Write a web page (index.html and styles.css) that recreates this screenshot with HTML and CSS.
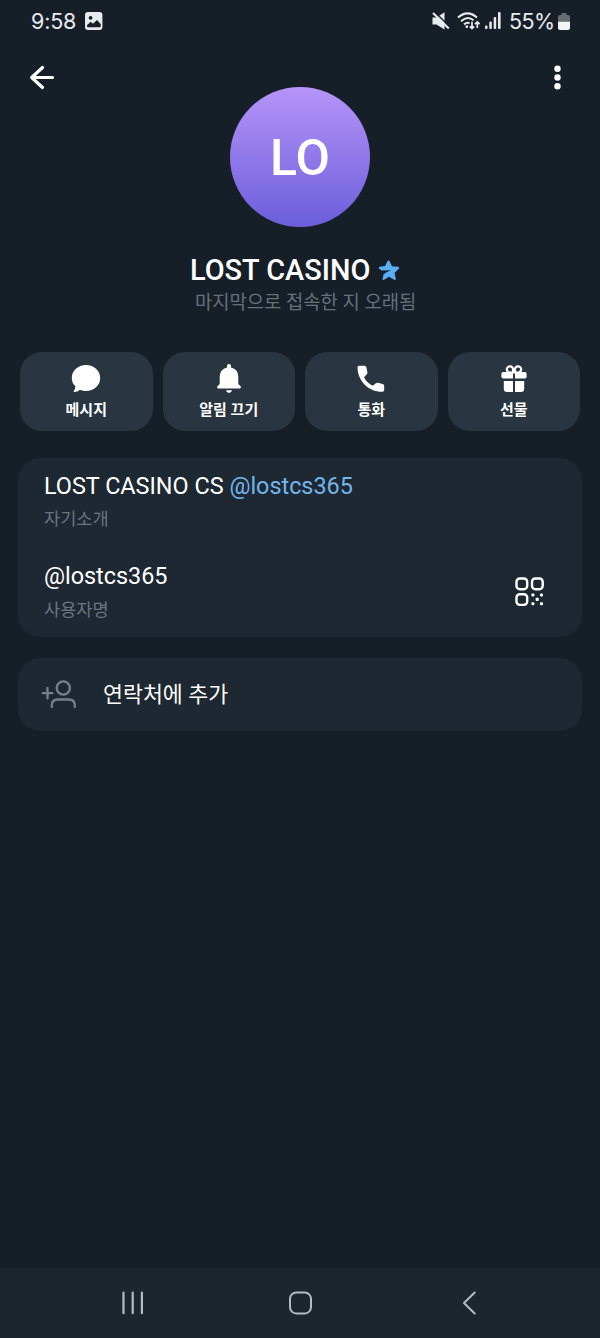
FILE: index.html
```html
<!DOCTYPE html>
<html lang="ko">
<head>
<meta charset="utf-8">
<title>LOST CASINO</title>
<link rel="stylesheet" href="styles.css">
</head>
<body>
<div class="screen">
  <div class="status">
    <span class="time">9:58</span>
    <svg class="st-photo" width="18" height="18" viewBox="0 0 18 18"><rect width="17.4" height="18" rx="3" fill="#e8ebee"/><circle cx="5.6" cy="5.8" r="1.9" fill="#161e27"/><path d="M2 13.3 5.7 9.8 8 11.8 12 8 15.8 12.3V14q0 1.300-1.300 1.300H3.300Q2 15.300 2 14z" fill="#161e27"/></svg>
    <div class="status-right">
      <svg width="18" height="18" viewBox="0 0 18 18"><path d="M.5 5.500h4L12.500.3v17.200L4.500 12.500h-4z" fill="#e8ebee"/><path d="M2.500-.2 18 15" stroke="#161e27" stroke-width="1.500"/><path d="M1 1 16.800 16.500" stroke="#e8ebee" stroke-width="2.100"/></svg>
      <svg class="st-wifi" width="24" height="18" viewBox="0 0 24 18" fill="none" stroke="#e8ebee" stroke-width="2"><path d="M1 5.500Q10.500-2.800 20 5.500M4 9.200Q10.500 3.200 16.500 8.300M7 12.500q3-2.600 5.500-1.200"/><circle cx="9.800" cy="14.700" r="1.400" fill="#e8ebee" stroke="none"/><path stroke-width="1.700" d="M15 9.800v6.700M12.800 14.300l2.200 2.200 2.200-2.200M20.300 16V10M18 12.200l2.300-2.300 2.300 2.300"/></svg>
      <svg class="st-signal" width="17" height="18" viewBox="0 0 17 18" fill="#e8ebee"><rect x="0" y="13.500" width="2.500" height="3.500" rx="1"/><rect x="4.300" y="9.500" width="2.500" height="7.500" rx="1"/><rect x="8.700" y="5" width="2.500" height="12" rx="1"/><rect x="13" y="0" width="2.600" height="17" rx="1"/></svg>
      <span class="percent">55%</span>
      <svg class="st-batt" width="12" height="17" viewBox="0 0 12 17"><path d="M0 4q0-2 2-2h1.500V1q0-1 1-1h3q1 0 1 1v1H10q2 0 2 2v5H0z" fill="#666c74"/><path d="M0 8.700h12V15q0 2-2 2H2q-2 0-2-2z" fill="#f2f4f6"/></svg>
    </div>
  </div>

  <div class="hero">
    <svg class="back" width="26" height="26" viewBox="0 0 26 26" fill="none" stroke="#fff" stroke-width="3.200" stroke-linecap="round" stroke-linejoin="round"><path d="M23.500 13.500H3M13.500 3.500 2.700 13.500l10.800 10"/></svg>
    <div class="avatar">LO</div>
    <svg class="more" width="8" height="24" viewBox="0 0 8 24" fill="#fff"><circle cx="4.500" cy="3.700" r="3.200"/><circle cx="4.500" cy="12.500" r="3.200"/><circle cx="4.500" cy="21.300" r="3.200"/></svg>
  </div>

  <div class="name-row">
    <span class="name">LOST CASINO</span>
    <svg width="22" height="21" viewBox="0 0 22 21"><path d="M9.400 1.200q1.300-1.600 2.300.2l2.300 4.800 6 .6q2 .4.700 1.900l-4.200 4.200 1.300 5.600q.2 2-1.600 1.200L11 16.800l-4.900 3q-1.900.8-1.500-1.200l1-4.300Q8.500 11.800 13.200 10.300 7.500 10.300 3.600 10.600L1 8.400Q0 7 1.800 6.700l5.400-.6z" fill="#5aaef5"/></svg>
  </div>
  <div class="seen">마지막으로 접속한 지 오래됨</div>

  <div class="actions">
    <div class="action">
      <svg width="30" height="28" viewBox="0 0 30 28"><path d="M15 0C23 0 29.200 5.600 29.200 13S23 26 15 26q-3.300 0-6-1.300-2.300 2.400-5.600 2.400-1.300-.2-.6-1.200 1.500-1.800 1.600-4.700Q.8 18 .8 13C.8 5.600 7 0 15 0z" fill="#fff"/></svg>
      <span>메시지</span>
    </div>
    <div class="action">
      <svg width="26" height="30" viewBox="0 0 26 30" fill="#fff"><path d="M13 0q2 0 2 2v1.500q7.300 1.500 7.300 10V20l2.500 2.600q.8 1.700-1 1.900H2.200q-1.800-.2-1-1.900L3.700 20v-6.500q0-8.500 7.300-10V2q0-2 2-2zM10 26.300h6q-.5 2.700-3 2.700t-3-2.700z"/></svg>
      <span>알림 끄기</span>
    </div>
    <div class="action">
      <svg width="28" height="28" viewBox="0 0 28 28"><path d="M2 .8h5.600q1.500 0 1.800 1.600l1 4.800q.2 1.200-.6 2L7 12.200q3 6 8.800 8.500l3-2.400q1-.8 2.100-.6l4.800 1.200q1.500.4 1.500 1.800V25q0 1.800-1.700 1.800C11.500 27 .8 16 .5 2.500Q.5 1 2 .8z" fill="#fff"/></svg>
      <span>통화</span>
    </div>
    <div class="action">
      <svg width="26" height="28" viewBox="0 0 26 28"><g fill="none" stroke="#fff" stroke-width="2.200"><path d="M12 7.500H8.500A3.100 3.100 0 1 1 12 5zM14 7.500h3.500A3.100 3.100 0 1 0 14 5z"/></g><path d="M2.200 7H12v6.500H2.200Q.4 13.500.4 11.800V8.700Q.4 7 2.200 7zM14 7h9.800q1.800 0 1.800 1.700v3.100q0 1.700-1.800 1.700H14zM2.800 16H12v11H6q-3.200 0-3.200-3.200zM14 16h9.200v7.800Q23.200 27 20 27h-6z" fill="#fff"/></svg>
      <span>선물</span>
    </div>
  </div>

  <div class="card info">
    <div>
      <div class="value">LOST CASINO CS <span class="link">@lostcs365</span></div>
      <div class="label">자기소개</div>
      <div class="value username">@lostcs365</div>
      <div class="label">사용자명</div>
    </div>
    <svg class="qr" width="30" height="30" viewBox="0 0 30 30"><g fill="none" stroke="#fff" stroke-width="2.400"><rect x="1.500" y="1.500" width="10.700" height="10.700" rx="3.300"/><rect x="17" y="1.500" width="10.700" height="10.700" rx="3.300"/><rect x="1.500" y="17.200" width="10.700" height="10.700" rx="3.300"/></g><g fill="#fff"><rect x="16.400" y="16.500" width="3" height="3" rx="1"/><rect x="25" y="16.500" width="3" height="3" rx="1"/><rect x="20.600" y="20.800" width="3.200" height="3.200" rx="1"/><rect x="16.400" y="25.200" width="3" height="3" rx="1"/><rect x="25" y="25.200" width="3" height="3" rx="1"/></g></svg>
  </div>

  <div class="card add">
    <svg width="36" height="30" viewBox="0 0 36 30" fill="none" stroke="#75808a" stroke-width="2.300" stroke-linecap="round"><circle cx="22.300" cy="8" r="6.600"/><path d="M10.800 27v-1.500q0-6 6-6h11q6 0 6 6V27M1.800 13.200h9.400M6.500 8v10.400"/></svg>
    <span>연락처에 추가</span>
  </div>

  <div class="nav">
    <svg width="24" height="26" viewBox="0 0 24 26" stroke="#b4bbc3" stroke-width="2.200" stroke-linecap="round"><path d="M4.500 2.600v20.600M13.700 2.600v20.600M22.900 2.600v20.600"/></svg>
    <svg width="24" height="26" viewBox="0 0 24 26" fill="none" stroke="#b4bbc3" stroke-width="2"><rect x="2" y="2.500" width="21" height="21" rx="6.300"/></svg>
    <svg width="24" height="26" viewBox="0 0 24 26" fill="none" stroke="#b4bbc3" stroke-width="2" stroke-linecap="round" stroke-linejoin="round"><path d="M17.700 2.500 7 13l10.700 10.500"/></svg>
  </div>
</div>
</body>
</html>
```
FILE: styles.css
```css
* { box-sizing: border-box; }
body { margin: 0; background: #161e27; }
svg { display: block; flex: none; overflow: visible; }
.screen {
  width: 600px;
  height: 1338px;
  display: flex;
  flex-direction: column;
  background: #161e27;
  color: #fff;
  font-family: Roboto, "Noto Sans CJK KR", sans-serif;
}
.status {
  height: 42px;
  padding: 0 30px;
  display: flex;
  align-items: center;
  font-family: Inter, sans-serif;
  font-size: 21.500px;
  color: #e8ebee;
}
.time { width: 46px; padding-left: 1px; white-space: nowrap; letter-spacing: -.2px; }
.st-photo { margin-left: 9px; }
.status-right { margin-left: auto; display: flex; align-items: center; }
.st-wifi { margin-left: 7px; }
.st-signal { margin-left: 4px; }
.percent { margin-left: 7px; width: 46px; white-space: nowrap; letter-spacing: -.6px; }
.st-batt { margin-left: 3px; }
.hero {
  height: 185px;
  padding: 0 30px;
  display: grid;
  grid-template-columns: 1fr 140px 1fr;
  align-items: start;
}
.back { margin-top: 22px; margin-left: -1px; }
.more { margin-top: 23px; margin-right: 9px; justify-self: end; }
.avatar {
  width: 140px;
  height: 140px;
  margin-top: 45px;
  border-radius: 50%;
  background: linear-gradient(#b694f9, #6b5edb);
  font-weight: 500;
  font-size: 50px;
  line-height: 142px;
  text-align: center;
}
.name-row {
  margin-top: 26px;
  padding-left: 190px;
  height: 35px;
  display: flex;
  align-items: center;
  gap: 8px;
}
.name { width: 180px; font-size: 28.900px; font-weight: 500; line-height: 35px; white-space: nowrap; }
.seen {
  height: 28px;
  padding-left: 195px;
  font-size: 18.800px;
  line-height: 30px;
  color: #66717b;
  white-space: nowrap;
}
.actions {
  margin-top: 36px;
  padding: 0 20px;
  display: grid;
  grid-template-columns: repeat(4, 1fr);
  gap: 10px;
}
.action {
  height: 79px;
  border-radius: 22px;
  background: #293642;
  display: flex;
  flex-direction: column;
  align-items: center;
  padding-top: 12px;
  font-size: 15px;
  font-weight: 700;
  line-height: 20px;
}
.action svg { height: 30px; }
.action span { margin-top: 6px; }
.card { margin: 0 18px; background: #1e2833; border-radius: 22px; display: flex; }
.info {
  margin-top: 27px;
  height: 179px;
  padding: 13px 37px 0 26px;
  justify-content: space-between;
}
.value { font-size: 23.400px; line-height: 30px; white-space: nowrap; }
.link { color: #72b5ec; }
.label { margin-top: 5px; font-size: 17.600px; line-height: 26px; color: #6b757f; }
.username { margin-top: 29px; }
.username + .label { margin-top: 6px; }
.qr { margin-top: 106px; }
.add {
  margin-top: 21px;
  height: 73px;
  padding-left: 23px;
  align-items: center;
  gap: 26px;
  font-size: 21.700px;
}
.add span { padding-bottom: 4px; }
.nav {
  margin-top: auto;
  height: 70px;
  padding: 0 119px;
  background: #1b262f;
  display: flex;
  align-items: center;
  justify-content: space-between;
}
```
